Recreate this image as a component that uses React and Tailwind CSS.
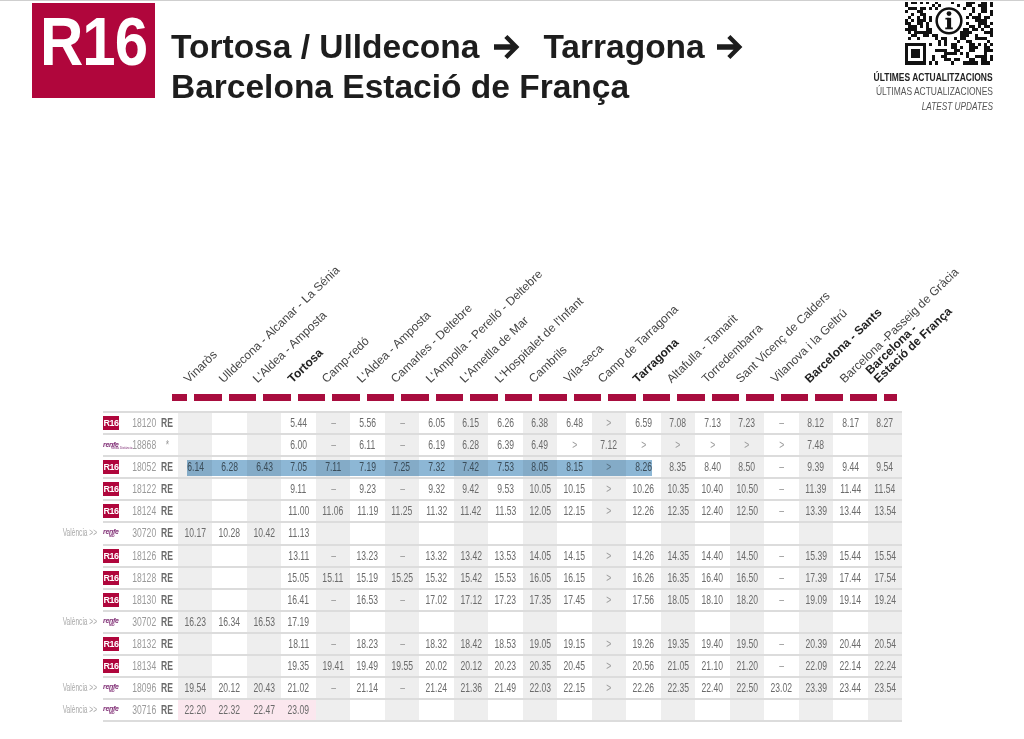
import React from "react";

const STATIONS = [
  { n: "Vinaròs" },
  { n: "Ulldecona - Alcanar - La Sénia" },
  { n: "L'Aldea - Amposta" },
  { n: "Tortosa", b: true },
  { n: "Camp-redó" },
  { n: "L'Aldea - Amposta" },
  { n: "Camarles - Deltebre" },
  { n: "L'Ampolla - Perelló - Deltebre" },
  { n: "L'Ametlla de Mar" },
  { n: "L'Hospitalet de l'Infant" },
  { n: "Cambrils" },
  { n: "Vila-seca" },
  { n: "Camp de Tarragona" },
  { n: "Tarragona", b: true },
  { n: "Altafulla - Tamarit" },
  { n: "Torredembarra" },
  { n: "Sant Vicenç de Calders" },
  { n: "Vilanova i la Geltrú" },
  { n: "Barcelona - Sants", b: true },
  { n: "Barcelona -Passeig de Gràcia" },
  { n: ["Barcelona -", "Estació de França"], b: true },
];

const ROWS = [
  { t: "r16", num: "18120", code: "RE", times: "_ _ _ 5.44 – 5.56 – 6.05 6.15 6.26 6.38 6.48 > 6.59 7.08 7.13 7.23 – 8.12 8.17 8.27" },
  { t: "md", num: "18868", code: "*", times: "_ _ _ 6.00 – 6.11 – 6.19 6.28 6.39 6.49 > 7.12 > > > > > 7.48 _ _" },
  { t: "r16", num: "18052", code: "RE", hl: true, times: "6.14 6.28 6.43 7.05 7.11 7.19 7.25 7.32 7.42 7.53 8.05 8.15 > 8.26 8.35 8.40 8.50 – 9.39 9.44 9.54" },
  { t: "r16", num: "18122", code: "RE", times: "_ _ _ 9.11 – 9.23 – 9.32 9.42 9.53 10.05 10.15 > 10.26 10.35 10.40 10.50 – 11.39 11.44 11.54" },
  { t: "r16", num: "18124", code: "RE", times: "_ _ _ 11.00 11.06 11.19 11.25 11.32 11.42 11.53 12.05 12.15 > 12.26 12.35 12.40 12.50 – 13.39 13.44 13.54" },
  { t: "av", pre: "València >>", num: "30720", code: "RE", times: "10.17 10.28 10.42 11.13" },
  { t: "r16", num: "18126", code: "RE", times: "_ _ _ 13.11 – 13.23 – 13.32 13.42 13.53 14.05 14.15 > 14.26 14.35 14.40 14.50 – 15.39 15.44 15.54" },
  { t: "r16", num: "18128", code: "RE", times: "_ _ _ 15.05 15.11 15.19 15.25 15.32 15.42 15.53 16.05 16.15 > 16.26 16.35 16.40 16.50 – 17.39 17.44 17.54" },
  { t: "r16", num: "18130", code: "RE", times: "_ _ _ 16.41 – 16.53 – 17.02 17.12 17.23 17.35 17.45 > 17.56 18.05 18.10 18.20 – 19.09 19.14 19.24" },
  { t: "av", pre: "València >>", num: "30702", code: "RE", times: "16.23 16.34 16.53 17.19" },
  { t: "r16", num: "18132", code: "RE", times: "_ _ _ 18.11 – 18.23 – 18.32 18.42 18.53 19.05 19.15 > 19.26 19.35 19.40 19.50 – 20.39 20.44 20.54" },
  { t: "r16", num: "18134", code: "RE", times: "_ _ _ 19.35 19.41 19.49 19.55 20.02 20.12 20.23 20.35 20.45 > 20.56 21.05 21.10 21.20 – 22.09 22.14 22.24" },
  { t: "av", pre: "València >>", num: "18096", code: "RE", times: "19.54 20.12 20.43 21.02 – 21.14 – 21.24 21.36 21.49 22.03 22.15 > 22.26 22.35 22.40 22.50 23.02 23.39 23.44 23.54" },
  { t: "av", pre: "València >>", num: "30716", code: "RE", pink: true, times: "22.20 22.32 22.47 23.09" },
];

const cols = (s) => {
  const a = s.split(" ").map((v) => (v === "_" ? "" : v));
  while (a.length < 21) a.push("");
  return a;
};

// fake qr pattern, deterministic
function qrPath() {
  const N = 29;
  let seed = 97531;
  const rnd = () => {
    seed = (seed * 1103515245 + 12345) & 0x7fffffff;
    return seed / 0x7fffffff;
  };
  const finders = [
    [0, 0],
    [22, 0],
    [0, 22],
  ];
  let d = "";
  for (let y = 0; y < N; y++) {
    for (let x = 0; x < N; x++) {
      let v = null;
      for (const [fx, fy] of finders) {
        const dx = x - fx;
        const dy = y - fy;
        if (dx >= -1 && dy >= -1 && dx <= 7 && dy <= 7) {
          if (dx < 0 || dy < 0 || dx > 6 || dy > 6) v = false;
          else v = Math.max(Math.abs(dx - 3), Math.abs(dy - 3)) !== 2;
        }
      }
      const r = rnd();
      if (v === null) {
        const cx = x + 0.5 - 14.5;
        const cy = y + 0.5 - 14.5;
        if (Math.sqrt(cx * cx + cy * cy) < 5.4) v = false;
        else v = r < 0.52;
      }
      if (v) d += `M${x} ${y}h1v1h-1z`;
    }
  }
  return d;
}

const QR_D = qrPath();

const Qr = () => (
  <svg width="88" height="63" viewBox="0 8.24 29 20.76" shapeRendering="crispEdges">
    <rect x="0" y="0" width="29" height="29" fill="#fff" />
    <path d={QR_D} fill="#111" />
    <g shapeRendering="geometricPrecision">
      <circle cx="14.5" cy="14.5" r="4.9" fill="#fff" />
      <circle cx="14.5" cy="14.5" r="4.1" fill="#fff" stroke="#111" strokeWidth="0.85" />
      <circle cx="14.5" cy="12.1" r="0.8" fill="#111" />
      <rect x="13.85" y="13.5" width="1.35" height="3.7" fill="#111" />
      <rect x="13.3" y="13.5" width="1.2" height="0.55" fill="#111" />
      <rect x="13.25" y="16.7" width="2.5" height="0.6" fill="#111" />
    </g>
  </svg>
);

const Arrow = () => (
  <svg width="27" height="24" viewBox="0 0 27 24" className="shrink-0">
    <path d="M0 9.3H16.5L10.3 3.1L13.4 0L25.4 12L13.4 24L10.3 20.9L16.5 14.7H0Z" fill="#1d1d1d" />
  </svg>
);

const Badge = () => (
  <div className="h-[14px] w-[16px] overflow-hidden bg-[#b0063c] text-center text-[9px] font-bold leading-[14px] tracking-[-0.5px] text-white">
    R16
  </div>
);

const Renfe = ({ md }) => (
  <div className="flex flex-col items-start leading-none text-[#7d2a72]">
    <span className="text-[7px] font-bold italic tracking-[-0.3px]">renfe</span>
    {md ? (
      <span className="-mt-px ml-[8px] whitespace-nowrap text-[3px]">Media Distància</span>
    ) : (
      <span className="ml-[6px] text-[3.5px] font-bold">MD</span>
    )}
  </div>
);

const Cond = ({ children, origin = "origin-center", className = "" }) => (
  <span className={`inline-block shrink-0 whitespace-nowrap scale-x-[0.66] ${origin} ${className}`}>{children}</span>
);

const Row = ({ r }) => {
  const times = cols(r.times);
  return (
    <div className="flex">
      <div className="flex w-[45px] justify-end pr-[6px] text-[10px] leading-[20px] text-[#aaa]">
        {r.pre && <Cond origin="origin-right">{r.pre}</Cond>}
      </div>
      <div className="relative flex h-[22.1px] w-[799px] border-b-2 border-[#dcdcdc]">
        <div className="flex w-[17px] items-center">
          {r.t === "r16" ? <Badge /> : <Renfe md={r.t === "md"} />}
        </div>
        <div className="w-[37px] pr-[2px] text-right text-[13px] leading-[20px] text-[#9a9a9a]">
          <Cond origin="origin-right">{r.num}</Cond>
        </div>
        <div className="w-[21px] text-center text-[13px] leading-[20px] font-bold text-[#6a6a6a]">
          <Cond className={r.code === "*" ? "font-normal text-[#999]" : ""}>{r.code}</Cond>
        </div>
        {times.map((v, i) => {
          let bg = i % 2 === 0 ? "bg-[#eeeeee]" : "bg-white";
          if (r.pink && i < 4) bg = "bg-[#fbe7ee]";
          const faint = v === "–" || v === ">";
          return (
            <div
              key={i}
              className={`w-[34.5px] text-center text-[13px] leading-[20px] ${bg} ${faint ? "text-[#9c9c9c]" : "text-[#6b6b6b]"}`}
            >
              {v && <Cond>{v}</Cond>}
            </div>
          );
        })}
        {r.hl && (
          <div className="pointer-events-none absolute left-[84px] top-[3px] h-[16px] w-[465px] bg-[#8db7d5] mix-blend-multiply" />
        )}
      </div>
    </div>
  );
};

export default function App() {
  return (
    <div className="min-h-[739px] w-[1024px] overflow-hidden bg-white font-['Liberation_Sans',Arial,sans-serif] text-[#333]">
      <div className="h-px bg-[#cfcfcf]" />

      {/* header */}
      <header className="flex h-[112px] pt-[2px]">
        <div className="ml-[32px] flex h-[95px] w-[123px] items-start justify-center bg-[#b0063c] pt-[4px]">
          <span className="inline-block origin-top scale-y-[1.15] text-[60px] font-bold leading-none tracking-[-1px] text-white">
            R16
          </span>
        </div>
        <div className="ml-[16px] mt-[24px] text-[33.5px] font-bold leading-[40px] text-[#1d1d1d]">
          <div className="flex items-center">
            <span>Tortosa / Ulldecona</span>
            <span className="ml-[15px] mr-[22px] flex">
              <Arrow />
            </span>
            <span>Tarragona</span>
            <span className="ml-[12px] flex">
              <Arrow />
            </span>
          </div>
          <div>Barcelona Estació de França</div>
        </div>
        <div className="ml-auto mr-[31px] -mt-px flex flex-col items-end">
          <Qr />
          <div className="mt-[5px] flex flex-col items-end text-[11px] leading-[14.5px]">
            <span className="inline-block origin-right scale-x-[0.77] whitespace-nowrap font-bold text-[#222]">
              ÚLTIMES ACTUALITZACIONS
            </span>
            <span className="inline-block origin-right scale-x-[0.77] whitespace-nowrap text-[#555]">
              ÚLTIMAS ACTUALIZACIONES
            </span>
            <span className="inline-block origin-right scale-x-[0.75] whitespace-nowrap italic text-[#555]">
              LATEST UPDATES
            </span>
          </div>
        </div>
      </header>

      {/* station names */}
      <div className="flex h-[276px] pl-[178px]">
        {STATIONS.map((s, i) => (
          <div key={i} className="flex w-[34.5px] items-end pb-[4px] pl-[12px]">
            <div className="flex w-0">
              <span
                className={`shrink-0 origin-bottom-left -rotate-[44deg] whitespace-nowrap text-[12px] leading-[12px] ${
                  s.b ? "font-bold text-[#222]" : "text-[#444]"
                }`}
              >
                {Array.isArray(s.n) ? (
                  <>
                    {s.n[0]}
                    <br />
                    {s.n[1]}
                  </>
                ) : (
                  s.n
                )}
              </span>
            </div>
          </div>
        ))}
      </div>

      {/* dashes */}
      <div className="mt-[5px] flex h-[7px] gap-[7px] pl-[172px]">
        <div className="w-[15px] bg-[#a80d3e]" />
        {Array.from({ length: 20 }).map((_, i) => (
          <div key={i} className="w-[27.5px] bg-[#a80d3e]" />
        ))}
        <div className="w-[13px] bg-[#a80d3e]" />
      </div>

      {/* table */}
      <div className="mt-[10px] pl-[58px]">
        <div className="ml-[45px] h-[2px] w-[799px] bg-[#dcdcdc]" />
        {ROWS.map((r, i) => (
          <Row key={i} r={r} />
        ))}
      </div>
    </div>
  );
}
